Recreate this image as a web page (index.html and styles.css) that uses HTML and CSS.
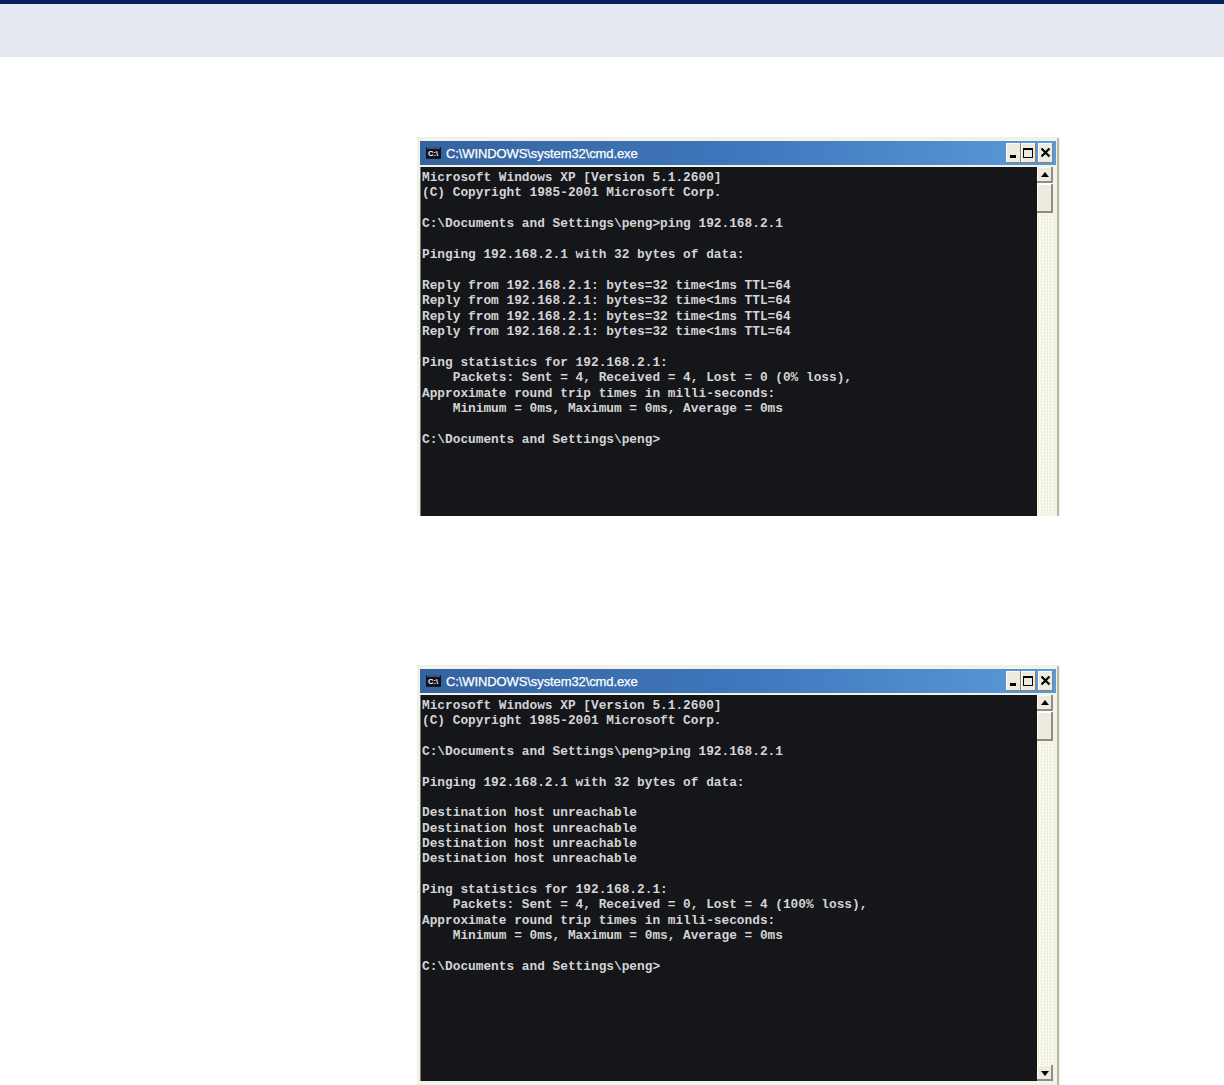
FILE: index.html
```html
<!DOCTYPE html>
<html lang="en">
<head>
<meta charset="utf-8">
<title>Ping</title>
<link rel="stylesheet" href="styles.css">
</head>
<body>
<header class="band"></header>
<main class="figures">
  <figure class="win win-a">
    <div class="titlebar">
      <svg class="appicon" width="15" height="12" viewBox="0 0 15 12"><rect width="15" height="12" rx="1" fill="#10131c"/><rect x="1" y="0.500" width="13" height="1" fill="#6f8fc4"/><text class="icontext" x="2" y="9">C:\</text></svg>
      <span class="title">C:\WINDOWS\system32\cmd.exe</span>
      <span class="btn"><svg width="15" height="20" viewBox="0 0 15 20"><rect x="4" y="12" width="6" height="3" fill="#000"/></svg></span>
      <span class="btn"><svg width="15" height="20" viewBox="0 0 15 20"><rect x="2.500" y="5.500" width="9" height="9" fill="none" stroke="#000"/><rect x="2" y="5" width="10" height="2" fill="#000"/></svg></span>
      <span class="btn btn-close"><svg width="15" height="20" viewBox="0 0 15 20"><path d="M3.500 5.500l8 8M11.500 5.500l-8 8" stroke="#000" stroke-width="2.200"/></svg></span>
    </div>
    <div class="body">
<pre class="console">Microsoft Windows XP [Version 5.1.2600]
(C) Copyright 1985-2001 Microsoft Corp.

C:\Documents and Settings\peng&gt;ping 192.168.2.1

Pinging 192.168.2.1 with 32 bytes of data:

Reply from 192.168.2.1: bytes=32 time&lt;1ms TTL=64
Reply from 192.168.2.1: bytes=32 time&lt;1ms TTL=64
Reply from 192.168.2.1: bytes=32 time&lt;1ms TTL=64
Reply from 192.168.2.1: bytes=32 time&lt;1ms TTL=64

Ping statistics for 192.168.2.1:
    Packets: Sent = 4, Received = 4, Lost = 0 (0% loss),
Approximate round trip times in milli-seconds:
    Minimum = 0ms, Maximum = 0ms, Average = 0ms

C:\Documents and Settings\peng&gt;</pre>
      <div class="scroll">
        <span class="arrow"><svg width="16" height="16" viewBox="0 0 16 16"><path d="M8 5l4 5H4z" fill="#000"/></svg></span>
        <span class="thumb"></span>
        <span class="track"></span>
      </div>
    </div>
  </figure>
  <figure class="win win-b">
    <div class="titlebar">
      <svg class="appicon" width="15" height="12" viewBox="0 0 15 12"><rect width="15" height="12" rx="1" fill="#10131c"/><rect x="1" y="0.500" width="13" height="1" fill="#6f8fc4"/><text class="icontext" x="2" y="9">C:\</text></svg>
      <span class="title">C:\WINDOWS\system32\cmd.exe</span>
      <span class="btn"><svg width="15" height="20" viewBox="0 0 15 20"><rect x="4" y="12" width="6" height="3" fill="#000"/></svg></span>
      <span class="btn"><svg width="15" height="20" viewBox="0 0 15 20"><rect x="2.500" y="5.500" width="9" height="9" fill="none" stroke="#000"/><rect x="2" y="5" width="10" height="2" fill="#000"/></svg></span>
      <span class="btn btn-close"><svg width="15" height="20" viewBox="0 0 15 20"><path d="M3.500 5.500l8 8M11.500 5.500l-8 8" stroke="#000" stroke-width="2.200"/></svg></span>
    </div>
    <div class="body">
<pre class="console console-b">Microsoft Windows XP [Version 5.1.2600]
(C) Copyright 1985-2001 Microsoft Corp.

C:\Documents and Settings\peng&gt;ping 192.168.2.1

Pinging 192.168.2.1 with 32 bytes of data:

Destination host unreachable
Destination host unreachable
Destination host unreachable
Destination host unreachable

Ping statistics for 192.168.2.1:
    Packets: Sent = 4, Received = 0, Lost = 4 (100% loss),
Approximate round trip times in milli-seconds:
    Minimum = 0ms, Maximum = 0ms, Average = 0ms

C:\Documents and Settings\peng&gt;</pre>
      <div class="scroll">
        <span class="arrow"><svg width="16" height="16" viewBox="0 0 16 16"><path d="M8 5l4 5H4z" fill="#000"/></svg></span>
        <span class="thumb"></span>
        <span class="track"></span>
        <span class="arrow"><svg width="16" height="16" viewBox="0 0 16 16"><path d="M4 6h8l-4 5z" fill="#000"/></svg></span>
      </div>
    </div>
  </figure>
</main>
</body>
</html>
```
FILE: styles.css
```css
html, body {
  margin: 0;
  padding: 0;
  background: #fff;
}
body {
  height: 1085px;
  overflow: hidden;
  font-family: "Liberation Sans", sans-serif;
}
.band {
  height: 53px;
  background: #e5e8f0;
  border-top: 4px solid #03215f;
}
.figures {
  display: flex;
  flex-direction: column;
  padding-left: 417px;
}
.win {
  margin: 0;
  width: 643px;
  box-sizing: border-box;
  display: flex;
  flex-direction: column;
  background: #f3f2e8;
  border: solid #f1f0e6;
  border-width: 1px 1px 0 1px;
  padding: 3px 3px 0 2px;
  box-shadow: inset -2px 0 0 #b8b7a8;
}
.win-a {
  height: 379px;
  margin-top: 80px;
}
.win-b {
  height: 420px;
  margin-top: 149px;
  padding-bottom: 4px;
}
.titlebar {
  flex: none;
  height: 24px;
  display: flex;
  align-items: center;
  background: linear-gradient(90deg, #34649f 0%, #3f76bc 50%, #5a9ad9 100%);
  padding-right: 3px;
}
.appicon {
  margin-left: 6px;
  flex: none;
}
.icontext {
  fill: #fff;
  font-family: "Liberation Sans", sans-serif;
  font-size: 7.5px;
  font-weight: 700;
}
.title {
  flex: 1;
  margin-left: 5px;
  color: #fff;
  font-size: 13px;
  letter-spacing: -0.1px;
  font-family: "Liberation Sans", sans-serif;
  font-weight: 400;
  -webkit-text-stroke: 0.25px #fff;
  white-space: nowrap;
}
.btn {
  flex: none;
  width: 15px;
  height: 20px;
  display: block;
  background: #ecebdd;
  box-shadow: inset -1px -1px 0 #85847a, inset 1px 1px 0 #fff;
}
.btn svg, .arrow svg {
  display: block;
}
.btn-close {
  margin-left: 2px;
}
.body {
  flex: 1;
  min-height: 0;
  display: flex;
  margin-top: 2px;
  border-left: 1px solid #77766c;
  overflow: hidden;
}
.console {
  flex: 1;
  margin: 0;
  padding: 3px 0 0 1px;
  background: #15161a;
  color: #d4d4d4;
  font-family: "Liberation Mono", monospace;
  font-size: 12.8px;
  font-weight: 700;
  line-height: 15.4px;
  overflow: hidden;
}
.console-b {
  line-height: 15.35px;
}
.scroll {
  flex: none;
  width: 16px;
  margin-right: 3px;
  display: flex;
  flex-direction: column;
  background: #fff;
}
.arrow {
  flex: none;
  height: 16px;
  display: block;
  background: #ecebdd;
  box-shadow: inset -2px -2px 0 #8f8e84, inset 1px 1px 0 #fff;
}
.thumb {
  flex: none;
  height: 29px;
  margin-top: 1px;
  display: block;
  background: #ecebdd;
  box-shadow: inset -2px -2px 0 #8f8e84, inset 1px 1px 0 #fff;
}
.track {
  flex: 1;
  display: block;
  background: repeating-conic-gradient(#eeedd9 0 25%, #fdfdf9 0 50%) 0 0 / 3px 3px;
}
```
